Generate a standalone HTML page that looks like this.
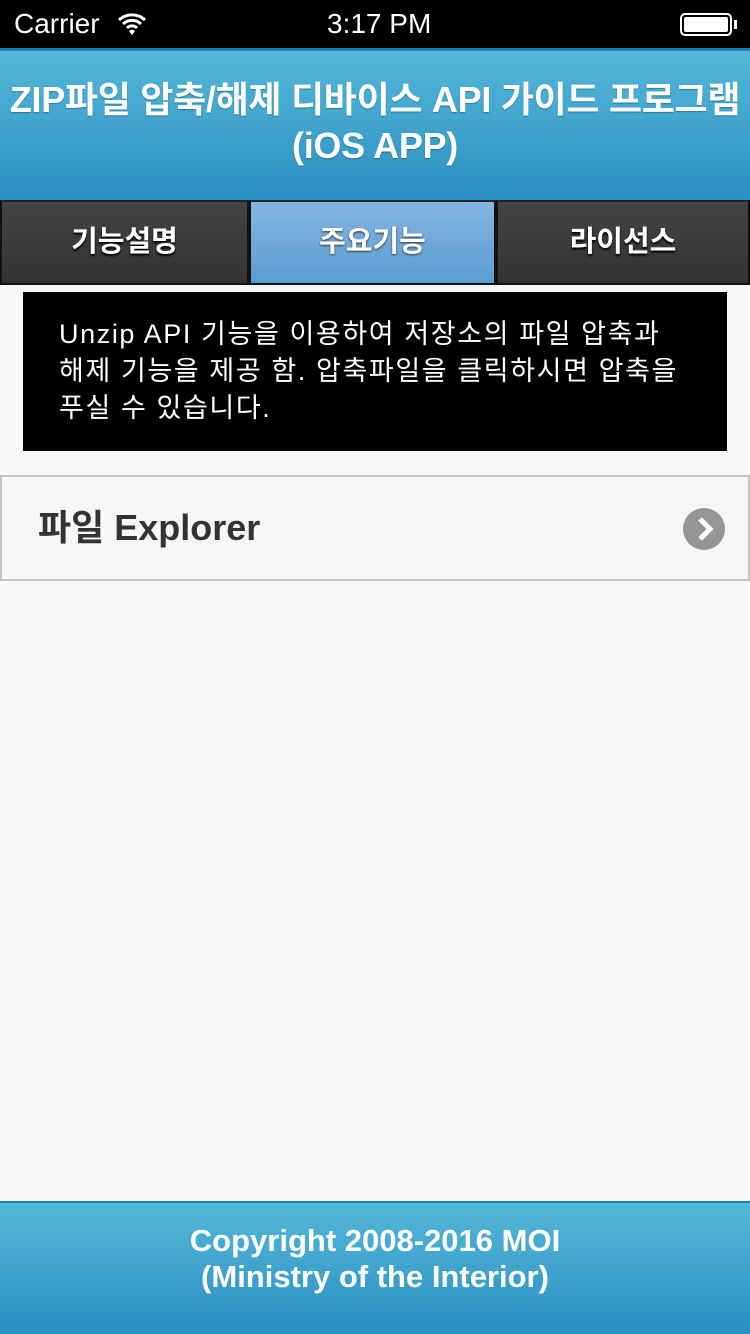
<!DOCTYPE html>
<html><head><meta charset="utf-8"><style>
*{margin:0;padding:0;box-sizing:border-box}
body{width:750px;height:1334px;background:#f8f8f8;font-family:"Liberation Sans","Noto Sans CJK KR",sans-serif;position:relative;overflow:hidden}
.sb{position:absolute;left:0;top:0;width:750px;height:48px;background:#000;color:#fff;font-size:28px}
.hd{position:absolute;left:0;top:48px;width:750px;height:152px;background:linear-gradient(#54b8d9,#2a8fc2);border-top:3px solid #1f7fb5;color:#fff;text-align:center;font-weight:bold;font-size:36px;line-height:46px;padding-top:26px;text-shadow:0 1px 1px rgba(0,0,0,.3);letter-spacing:-0.3px;white-space:nowrap}
.tabs{position:absolute;left:0;top:200px;width:750px;height:85px;display:flex;background:#111}
.tab{height:85px;border:2px solid #111;border-top:2px solid #222;color:#fff;font-weight:bold;font-size:29px;text-align:center;line-height:80px;background:linear-gradient(#444,#333);text-shadow:0 2px 2px #000}
.tab.a{background:linear-gradient(#84b6e4,#5b9bd0);text-shadow:0 1px 2px #333}
.msg{position:absolute;left:23px;top:292px;width:704px;height:159px;background:#000;color:#fff;font-size:27px;letter-spacing:1.6px;line-height:37px;padding:24px 30px 0 36px}
.row{position:absolute;left:0;top:475px;width:750px;height:106px;border:2px solid #c4c4c4;background:#f7f7f7;font-weight:bold;font-size:36px;color:#333;padding-left:36px;line-height:102px}
.ft{position:absolute;left:0;top:1201px;width:750px;height:133px;background:linear-gradient(#54b8d9,#2a8fc2);border-top:2px solid #1f7fb5;color:#fff;font-weight:bold;font-size:31px;text-align:center;line-height:36px;padding-top:20px}
</style></head><body>
<div class="sb">
<span style="position:absolute;left:14px;top:8px">Carrier</span>
<svg style="position:absolute;left:117px;top:12px" width="30" height="24" viewBox="0 0 30 24"><path d="M2 8a19 19 0 0 1 26 0M6 12a13 13 0 0 1 18 0M10 16a7 7 0 0 1 10 0" stroke="#fff" stroke-width="3" fill="none"/><path d="M12 19l3 4 3-4a4 4 0 0 0-6 0z" fill="#fff"/></svg>
<span style="position:absolute;left:327px;top:8px">3:17 PM</span>
<div style="position:absolute;left:680px;top:13px;width:52px;height:23px;border:2px solid #fff;border-radius:5px;padding:2px"><div style="background:#fff;width:100%;height:100%;border-radius:2px"></div></div>
<div style="position:absolute;left:734px;top:20px;width:3px;height:9px;background:#fff"></div>
</div>
<div class="hd">ZIP파일 압축/해제 디바이스 API 가이드 프로그램<br>(iOS APP)</div>
<div class="tabs"><div class="tab" style="width:249px">기능설명</div><div class="tab a" style="width:247px">주요기능</div><div class="tab" style="width:254px">라이선스</div></div>
<div class="msg">Unzip API 기능을 이용하여 저장소의 파일 압축과<br>해제 기능을 제공 함. 압축파일을 클릭하시면 압축을<br>푸실 수 있습니다.</div>
<div class="row">파일 Explorer
<svg style="position:absolute;left:680px;top:30px" width="44" height="44" viewBox="0 0 44 44"><circle cx="22" cy="22" r="21" fill="#959595"/><path d="M18 12l10 10-10 10" stroke="#fff" stroke-width="5" fill="none"/></svg></div>
<div class="ft">Copyright 2008-2016 MOI<br>(Ministry of the Interior)</div>
</body></html>
